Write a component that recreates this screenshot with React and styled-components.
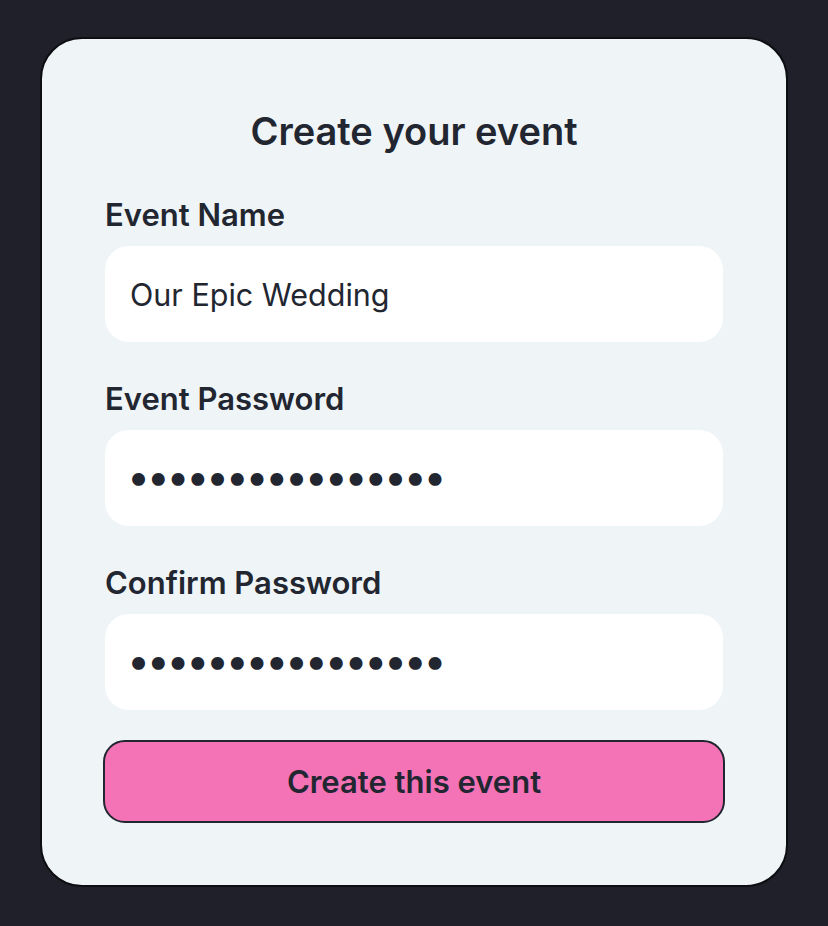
import React from 'react';
import styled, { createGlobalStyle } from 'styled-components';

const GlobalStyle = createGlobalStyle`
  html, body {
    margin: 0;
    padding: 0;
    background: #1f2029;
    font-family: Inter, "Noto Sans", sans-serif;
  }
  * { box-sizing: border-box; }
`;

const Page = styled.div`
  min-height: 926px;
  padding: 37px 40px 0 40px;
`;

const Card = styled.form`
  width: 748px;
  height: 850px;
  background: #eff4f6;
  border: 2px solid #0d0e12;
  border-radius: 42px;
  padding: 0 63px;
  display: flex;
  flex-direction: column;
`;

const Title = styled.h1`
  margin: 70px 0 0 0;
  text-align: center;
  font-size: 38px;
  line-height: 44px;
  font-weight: 600;
  color: #222631;
`;

const Field = styled.div`
  display: flex;
  flex-direction: column;
  margin-top: ${(p) => p.$top}px;
`;

const Label = styled.label`
  font-size: 31px;
  line-height: 34px;
  font-weight: 600;
  color: #222631;
  margin-bottom: 14px;
`;

const Input = styled.input`
  width: 618px;
  height: 96px;
  border: none;
  outline: none;
  border-radius: 24px;
  background: #ffffff;
  padding: 0 25px;
  font-family: Inter, "Noto Sans", sans-serif;
  font-size: 30.5px;
  color: #222631;

  &[type='password'] {
    padding: 0 22px 4px 22px;
    font-size: 41px;
    letter-spacing: -3.3px;
  }
`;

const Button = styled.button`
  margin-top: 30px;
  margin-left: -2px;
  width: 622px;
  height: 83px;
  background: #f472b6;
  border: 2px solid #222631;
  border-radius: 22px;
  font-family: Inter, "Noto Sans", sans-serif;
  font-size: 31px;
  font-weight: 600;
  color: #222631;
  cursor: pointer;
`;

export default function App() {
  return (
    <>
      <GlobalStyle />
      <Page>
        <Card onSubmit={(e) => e.preventDefault()}>
          <Title>Create your event</Title>
          <Field $top={45}>
            <Label>Event Name</Label>
            <Input type="text" defaultValue="Our Epic Wedding" />
          </Field>
          <Field $top={40}>
            <Label>Event Password</Label>
            <Input type="password" defaultValue="weddingpassword1" />
          </Field>
          <Field $top={40}>
            <Label>Confirm Password</Label>
            <Input type="password" defaultValue="weddingpassword1" />
          </Field>
          <Button type="submit">Create this event</Button>
        </Card>
      </Page>
    </>
  );
}
